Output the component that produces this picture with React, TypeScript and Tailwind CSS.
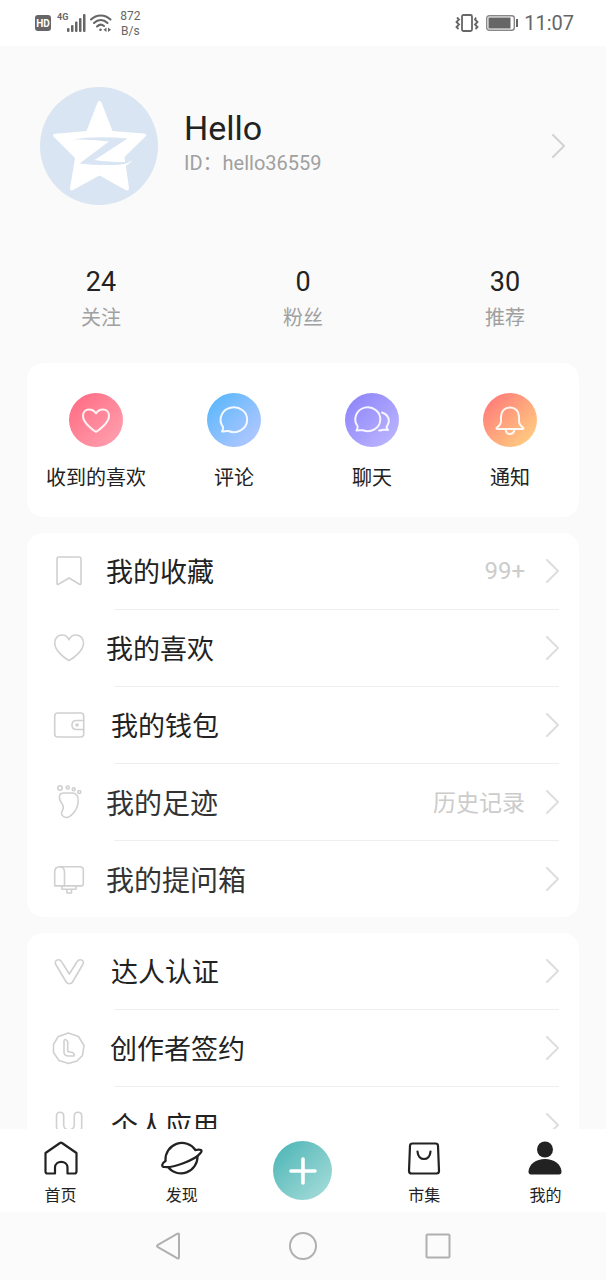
import React from "react";

interface Row {
  label: string;
  icon: React.ReactNode;
  labelClass: string;
  value?: string;
  valueClass?: string;
}

const Outline = ({ children }: { children: React.ReactNode }) => (
  <svg
    viewBox="0 0 32 32"
    className="size-8 shrink-0 overflow-visible text-[#d0d0d0]"
    fill="none"
    stroke="currentColor"
    strokeWidth="1.6"
    strokeLinecap="round"
    strokeLinejoin="round"
    aria-hidden="true"
  >
    {children}
  </svg>
);

const Chevron = ({ className }: { className?: string }) => (
  <svg
    viewBox="0 0 14 24"
    className={`h-6 w-[14px] shrink-0 ${className ?? ""}`}
    fill="none"
    stroke="currentColor"
    strokeWidth="2"
    strokeLinecap="round"
    strokeLinejoin="round"
    aria-hidden="true"
  >
    <path d="M2 1L13 12L2 23" />
  </svg>
);

const stats = [
  { value: "24", label: "关注" },
  { value: "0", label: "粉丝" },
  { value: "30", label: "推荐" },
];

const shortcuts = [
  {
    label: "收到的喜欢",
    color: "from-[#ff6780] to-[#ffa3b3]",
    icon: (
      <path d="M27 39C24.500 37.500 14 30 14 23C14 19 16.700 16.500 20 16.500C23.300 16.500 25.800 18.500 27 20.500C28.200 18.500 30.700 16.500 34 16.500C37.300 16.500 40 19 40 23C40 30 29.500 37.500 27 39Z" />
    ),
  },
  {
    label: "评论",
    color: "from-[#49b5fc] to-[#b9c9ff]",
    icon: (
      <path d="M15 38.500C16 37 16.500 35.500 16 33.800A13.300 12.400 0 1 1 21.500 38C19.500 37.500 17.500 38.500 15 38.500Z" />
    ),
  },
  {
    label: "聊天",
    color: "from-[#8b80f8] to-[#c0b9ff]",
    icon: (
      <>
        <path d="M11.500 37.500C12.500 36 13 34.500 12.500 33A12.500 12 0 1 1 18 37.300C16 36.800 14 37.500 11.500 37.500Z" />
        <path d="M37 19.500C41.500 21 43.800 24 43.800 28C43.800 30 43 31.700 42 33C41.300 34.500 42 36 43 37C40.500 37 38.500 36.300 37 37C35.800 37.400 34.800 37.600 34 37.400" />
      </>
    ),
  },
  {
    label: "通知",
    color: "from-[#ff6f78] to-[#ffd681]",
    icon: (
      <>
        <path d="M14 34.500C16.800 32.500 18 30.500 18 28V23.500C18 18 21.800 14.500 27 14.500C32.200 14.500 36 18 36 23.500V28C36 30.500 37.200 32.500 40 34.500C40.800 35.300 40.500 36 39.500 36H14.500C13.500 36 13.200 35.300 14 34.500Z" />
        <path d="M22.500 36.500C23 39.500 24.800 41 27 41C29.200 41 31 39.500 31.500 36.500" />
      </>
    ),
  },
];

const mine: Row[] = [
  {
    label: "我的收藏",
    labelClass: "text-[27px]",
    value: "99+",
    valueClass: "text-2xl",
    icon: (
      <path d="M4 4C4 2.500 4.500 2 6 2H26C27.500 2 28 2.500 28 4V28.500C28 29.500 27.300 29.800 26.500 29.300L16 23L5.500 29.300C4.700 29.800 4 29.500 4 28.500Z" />
    ),
  },
  {
    label: "我的喜欢",
    labelClass: "text-[27px]",
    icon: (
      <path d="M16 28.500C13 27 1.700 19.500 1.700 11C1.700 6 5 3 9 3C12 3 14.800 5 16 7.800C17.200 5 20 3 23 3C27 3 30.500 6 30.500 11C30.500 19.500 19 27 16 28.500Z" />
    ),
  },
  {
    label: "我的钱包",
    labelClass: "pl-[5px] text-[27px]",
    icon: (
      <>
        <rect x="1.700" y="4" width="29" height="24" rx="3" />
        <path d="M30.500 11.500H23.500C20.700 11.500 19 13.500 19 16S20.700 20.500 23.500 20.500H30.500" />
        <circle cx="24" cy="16" r="1" />
      </>
    ),
  },
  {
    label: "我的足迹",
    labelClass: "text-[28px] text-[#333]",
    value: "历史记录",
    valueClass: "pt-1 text-[23px]",
    icon: (
      <>
        <circle cx="7" cy="2" r="2.200" />
        <circle cx="14.700" cy="1.500" r="1.500" />
        <circle cx="20.700" cy="3.200" r="1.500" />
        <circle cx="26.300" cy="6" r="1.500" />
        <path d="M11 7H19C23.500 7 25.500 10 25.200 15C25 21.500 22.500 25 19.500 28C17 30.800 15.500 31.800 13 31.500C9 31 7.500 28 9.200 25C11 22 10.800 20 8.500 17C5.500 13 5 7 11 7Z" />
      </>
    ),
  },
  {
    label: "我的提问箱",
    labelClass: "text-[28px] text-[#333]",
    icon: (
      <>
        <path d="M1.700 22.500V9C1.700 5.500 3.500 3.700 6.500 3.700H27C29 3.700 30.300 5 30.300 7V20.700C30.300 22.200 29.500 22.900 28 22.900H2Z" />
        <path d="M6.500 3.700C9.500 3.700 11.500 5.500 11.500 9V22.700M9 23.200V26.200H23V23.200M14 26.200V30H18.500V26.200" />
      </>
    ),
  },
];

const creator: Row[] = [
  {
    label: "达人认证",
    labelClass: "pl-[5px] text-[27px]",
    icon: (
      <path d="M2.800 9.500C1.300 6.800 3 4.800 5.500 4.800C7 4.800 8 5.500 8.700 6.800L16.300 19L24 6.800C24.700 5.500 25.700 4.800 27.200 4.800C29.800 4.800 31.300 6.800 29.800 9.500L19.500 27C18 29.300 14.800 29.300 13.200 27Z" />
    ),
  },
  {
    label: "创作者签约",
    labelClass: "pl-1 text-[27px]",
    icon: (
      <>
        <path d="M15.300 1L25.500 4.500L31 13.500L29.500 23.500L24 29L15.500 31.500L6 28.500L0.500 20.500V12.500L5 4.800Z" />
        <path d="M11 9.500C11 7.500 12 7 13.200 8L14.700 9.500V19.500L19.500 20.500C21 21.500 22 23 21 24H15.500C12.500 24 11 22.500 11 20Z" />
      </>
    ),
  },
  {
    label: "个人应用",
    labelClass: "pl-[5px] text-[27px]",
    icon: (
      <path d="M3.500 7C3.500 2 10.700 2 10.700 7V16C10.700 22.500 21.300 22.500 21.300 16V7C21.300 2 28.700 2 28.700 7V17C28.700 33 3.500 33 3.500 17Z" />
    ),
  },
];

function RowCard({ rows }: { rows: Row[] }) {
  return (
    <ul className="rounded-2xl bg-white">
      {rows.map((row, i) => (
        <li key={row.label}>
          <a href="#" className="flex h-[76px] items-center pr-5 pl-[26px]">
            <Outline>{row.icon}</Outline>
            <span className={`ml-[21px] flex-1 pt-[5px] ${row.labelClass}`}>
              {row.label}
            </span>
            {row.value && (
              <span className={`mr-5 text-[#ccc] ${row.valueClass ?? ""}`}>
                {row.value}
              </span>
            )}
            <Chevron className="text-[#dedede]" />
          </a>
          {i < rows.length - 1 && (
            <div className="mr-5 ml-[87px] h-px bg-[#eee]" />
          )}
        </li>
      ))}
    </ul>
  );
}

function StatusBar() {
  return (
    <header className="flex h-[46px] shrink-0 items-center justify-between bg-white pr-8 pl-[35px] text-[#666]">
      <div className="flex items-center">
        <span className="flex size-4 items-center justify-center rounded-[3px] bg-[#666] text-[10px] font-bold text-white">
          HD
        </span>
        <span className="ml-[6px] self-start pt-1 text-[9px] leading-3 font-bold">
          4G
        </span>
        <svg viewBox="0 0 20 18" className="-ml-px h-[18px] w-5" fill="currentColor">
          <rect x="0" y="14" width="2.500" height="4" rx="1" />
          <rect x="4" y="11" width="2.500" height="7" rx="1" />
          <rect x="8" y="7.500" width="2.500" height="10.500" rx="1" />
          <rect x="12" y="4" width="2.500" height="14" rx="1" />
          <rect x="16" y="0" width="2.500" height="18" rx="1" />
        </svg>
        <svg
          viewBox="0 0 22 18"
          className="ml-[3px] h-[18px] w-[22px]"
          fill="none"
          stroke="currentColor"
          strokeWidth="2"
          strokeLinecap="round"
        >
          <path d="M1 5.500C6.500 0 15 0 20.500 5.500M4 9C8 5 13.500 5 17.500 9M7 12.500C9.300 10.300 12 10.300 14 12" />
          <circle cx="10.500" cy="15.800" r="1.300" fill="currentColor" stroke="none" />
          <path d="M16.500 13.500L13.500 15.800L16.500 18ZM18 13.500L21 15.800L18 18Z" fill="currentColor" stroke="none" />
        </svg>
        <span className="ml-2 pt-[2px] text-center text-xs leading-[15px]">
          872
          <br />
          B/s
        </span>
      </div>
      <div className="flex items-center">
        <svg
          viewBox="0 0 24 18"
          className="h-[18px] w-6"
          fill="none"
          stroke="currentColor"
          strokeWidth="1.800"
        >
          <rect x="7" y="1" width="10" height="16" rx="1.500" />
          <path d="M2 3.500L4 5.500L1.500 8L4 10.500L1.500 13L3.500 15M21 3.500L20 5.500L22.500 8L20 10.500L22.500 13L20.500 15" />
        </svg>
        <svg viewBox="0 0 33 16" className="ml-[7px] h-4 w-[33px]" fill="none">
          <rect x="0.700" y="0.700" width="27.600" height="14.600" rx="2.500" stroke="#888" strokeWidth="1.400" />
          <rect x="2.500" y="2.500" width="22" height="11" fill="#666" />
          <rect x="30" y="4" width="2" height="8" fill="#666" />
        </svg>
        <span className="ml-[5px] text-xl leading-6">11:07</span>
      </div>
    </header>
  );
}

function Profile() {
  return (
    <a href="#" className="flex items-center pt-[41px] pr-[41px] pl-[40px]">
      <svg viewBox="0 0 118 118" className="size-[118px] shrink-0" role="img" aria-label="Hello">
        <circle cx="59" cy="59" r="59" fill="#d9e5f2" />
        <path
          d="M57.500 15.500Q59.500 12 61.500 15.500L72.500 44L104 46.500Q108 47.500 105 50L84.500 70L89 101Q89 104.500 85.500 103L59.500 88.500L33 103Q29.500 104.500 30 101L35 71L14 50Q11.500 47.500 15 46.800L46.500 44Z"
          fill="#fff"
        />
        <path d="M80 74Q86 76 92 74Q87 80 78 80Z" fill="#fff" />
        <path
          d="M33 52.500Q56 48.500 87.500 51.500L54.500 73Q70 75.500 90.500 75Q84 78 74 78Q56 78.500 39.500 76.500L69 54.500Q52 52 33 52.500Z"
          fill="#d9e5f2"
        />
      </svg>
      <div className="ml-[26px] flex-1 pb-[6px]">
        <h1 className="text-[34px] leading-10">Hello</h1>
        <p className="text-xl leading-[30px] text-[#a0a0a0]">ID：hello36559</p>
      </div>
      <Chevron className="text-[#d2d2d2]" />
    </a>
  );
}

const tabIcon = "h-9 w-11";

function TabBar() {
  const tab = "flex flex-col items-center pt-[11px] text-base leading-6";
  return (
    <nav className="grid h-[83px] shrink-0 grid-cols-5 bg-white">
      <a href="#" className={tab}>
        <svg viewBox="0 0 44 36" className={tabIcon} fill="none" stroke="currentColor" strokeWidth="2.200" strokeLinejoin="round">
          <path d="M6.500 13L21 3Q22 2.300 23 3L37.500 13V31.500Q37.500 33.500 35.500 33.500H28.500V27.500C28.500 20 16 20 16 27.500V33.500H8.500Q6.500 33.500 6.500 31.500Z" />
        </svg>
        <span className="mt-2">首页</span>
      </a>
      <a href="#" className={tab}>
        <svg viewBox="0 0 44 36" className={tabIcon} fill="none" stroke="currentColor" strokeWidth="2.200" strokeLinejoin="round" strokeLinecap="round">
          <path d="M5.500 20.500A16.500 16.500 0 0 1 35.500 10M37.500 16.500A16.500 16.500 0 0 1 8 27" />
          <path d="M5.500 21C1.500 23.500 1 27 4.500 27C12 28 35 20.500 40.500 13C43 10 41 9 35.500 10" />
        </svg>
        <span className="mt-2">发现</span>
      </a>
      <div className="flex justify-center pt-3">
        <button
          type="button"
          aria-label="发布"
          className="flex size-[59px] items-center justify-center rounded-full bg-linear-to-br from-[#43b3b4] to-[#a9dfdc]"
        >
          <svg viewBox="0 0 28 28" className="size-7" stroke="#fff" strokeWidth="3.600" strokeLinecap="round">
            <path d="M14 2V26M2 14H26" />
          </svg>
        </button>
      </div>
      <a href="#" className={tab}>
        <svg viewBox="0 0 44 36" className={tabIcon} fill="none" stroke="currentColor" strokeWidth="2.200" strokeLinejoin="round" strokeLinecap="round">
          <path d="M10.500 3.500H33.500Q35.800 3.500 36 5.800L37 31Q37 33.500 34.500 33.500H9.500Q7 33.500 7 31L8 5.800Q8.200 3.500 10.500 3.500Z" />
          <path d="M15.500 11.500C16 21.500 28 21.500 28.500 11.500" />
        </svg>
        <span className="mt-2">市集</span>
      </a>
      <a href="#" className={tab} aria-current="page">
        <svg viewBox="0 0 44 36" className={tabIcon} fill="currentColor">
          <circle cx="22" cy="9.500" r="8" />
          <path d="M22 19C31 19 38 24 38.500 31.500Q38.500 34.500 36 34.500H8Q5.500 34.500 5.500 31.500C6 24 13 19 22 19Z" />
        </svg>
        <span className="mt-2">我的</span>
      </a>
    </nav>
  );
}

function SystemNav() {
  const icon = "size-7";
  return (
    <footer className="flex h-[68px] shrink-0 items-center justify-center gap-[107px] bg-[#fbfbfb] text-[#b0b0b0]">
      <button type="button" aria-label="返回">
        <svg viewBox="0 0 28 28" className={icon} fill="none" stroke="currentColor" strokeWidth="2" strokeLinejoin="round">
          <path d="M3.500 13.200Q2.500 14 3.500 14.800L23.500 26.300Q25 27 25 25.300V2.700Q25 1 23.500 1.700Z" />
        </svg>
      </button>
      <button type="button" aria-label="主屏幕">
        <svg viewBox="0 0 28 28" className={icon} fill="none" stroke="currentColor" strokeWidth="2">
          <circle cx="14" cy="14" r="13" />
        </svg>
      </button>
      <button type="button" aria-label="最近任务">
        <svg viewBox="0 0 28 28" className={icon} fill="none" stroke="currentColor" strokeWidth="2">
          <rect x="2.500" y="2.500" width="23" height="23" rx="1" />
        </svg>
      </button>
    </footer>
  );
}

export default function App() {
  return (
    <div
      lang="zh-CN"
      className="flex h-screen flex-col bg-[#fafafa] font-[Roboto,'Noto_Sans_CJK_SC',sans-serif] text-[#222]"
    >
      <StatusBar />
      <main className="min-h-0 flex-1 overflow-y-auto [scrollbar-width:none]">
        <Profile />
        <div className="mt-[59px] grid grid-cols-3 text-center">
          {stats.map((s) => (
            <a href="#" key={s.label}>
              <div className="text-[27px] leading-9">{s.value}</div>
              <div className="text-xl leading-9 text-[#a0a0a0]">{s.label}</div>
            </a>
          ))}
        </div>
        <div className="mx-[27px] mt-[27px] flex flex-col gap-4">
          <div className="grid grid-cols-4 rounded-2xl bg-white pt-[30px] pb-6">
            {shortcuts.map((s) => (
              <button
                type="button"
                key={s.label}
                className="flex flex-col items-center text-xl leading-[30px]"
              >
                <span className={`rounded-full bg-linear-to-br ${s.color}`}>
                  <svg
                    viewBox="0 0 54 54"
                    className="size-[54px]"
                    fill="none"
                    stroke="#fff"
                    strokeOpacity="0.900"
                    strokeWidth="2"
                    strokeLinecap="round"
                    strokeLinejoin="round"
                    aria-hidden="true"
                  >
                    {s.icon}
                  </svg>
                </span>
                <span className="mt-4">{s.label}</span>
              </button>
            ))}
          </div>
          <RowCard rows={mine} />
          <RowCard rows={creator} />
        </div>
      </main>
      <TabBar />
      <SystemNav />
    </div>
  );
}
